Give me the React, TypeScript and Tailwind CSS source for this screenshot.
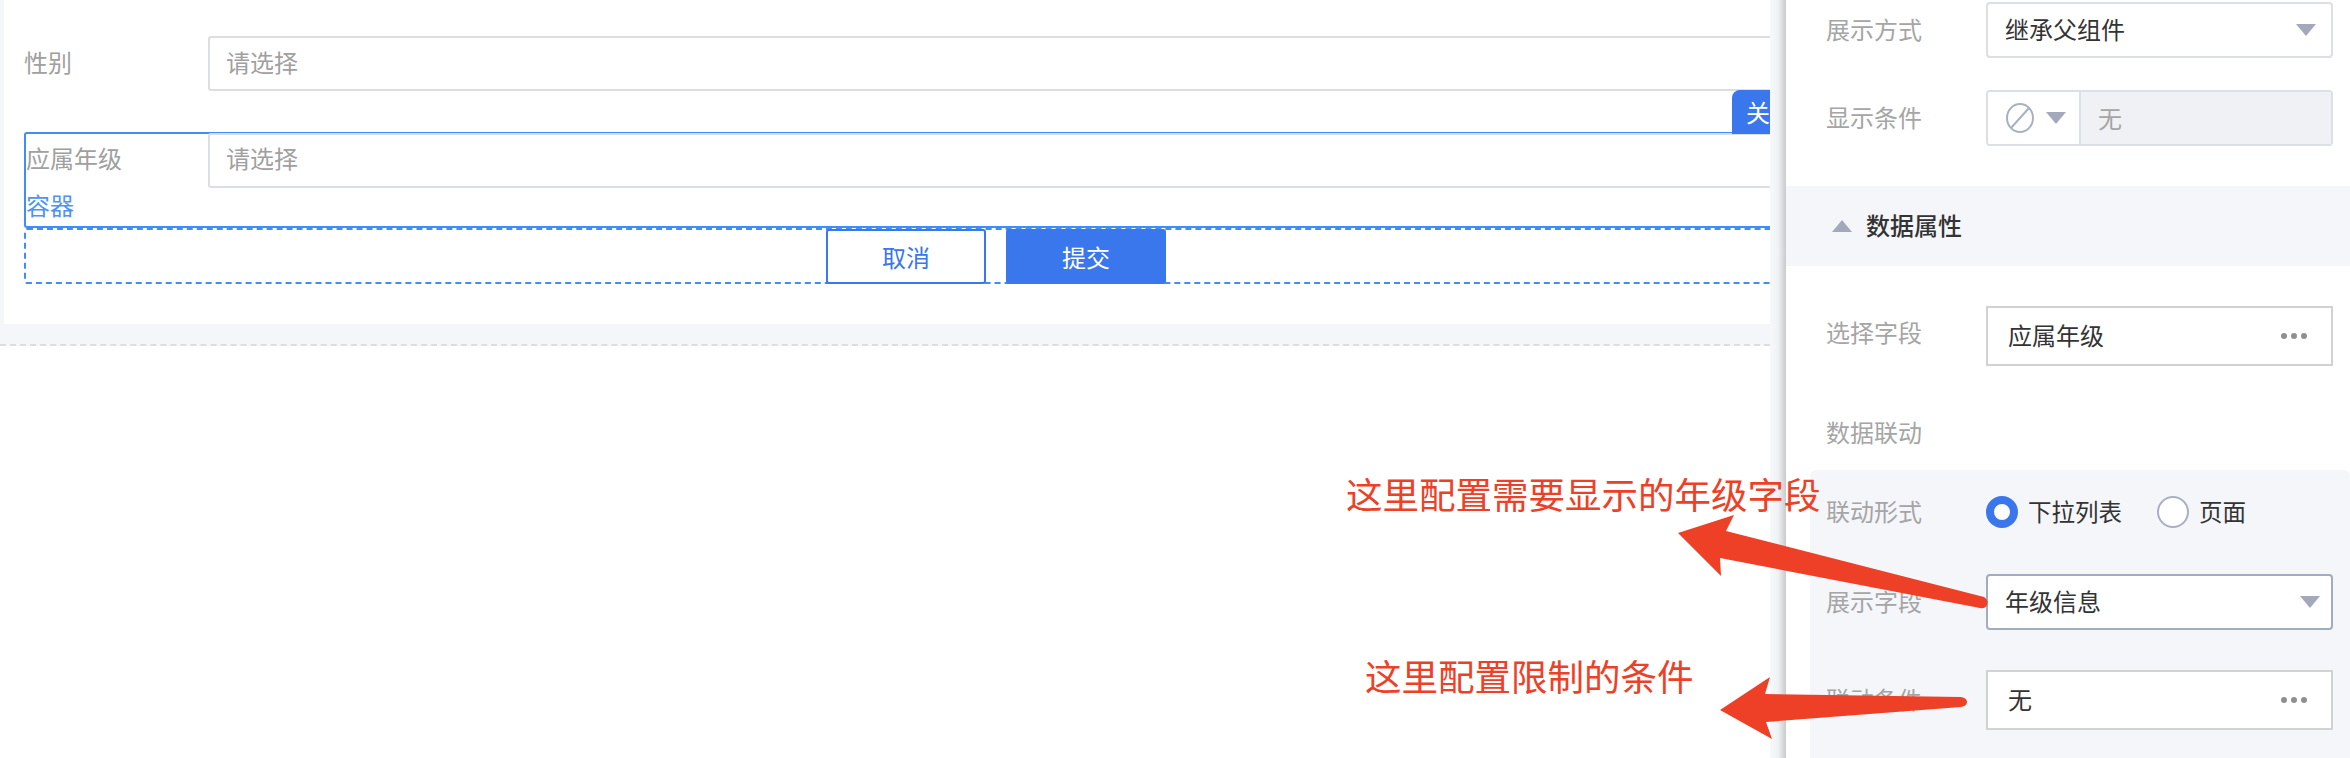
import React from "react";

const Caret = ({ up = false }: { up?: boolean }) => (
    <svg width="20" height="12" viewBox="0 0 20 12" className="shrink-0">
        <polygon points={up ? "10,0 20,12 0,12" : "0,0 20,0 10,12"} fill="#a3a9bb" />
    </svg>
);

const Dots = () => (
    <span className="flex gap-[4px] shrink-0">
        <i className="block w-[6px] h-[6px] rounded-full bg-[#8f8f8f]" />
        <i className="block w-[6px] h-[6px] rounded-full bg-[#8f8f8f]" />
        <i className="block w-[6px] h-[6px] rounded-full bg-[#8f8f8f]" />
    </span>
);

// glyphs sit a little low in the line box, the padding lifts them
const Txt = ({ children }: { children: React.ReactNode }) => (
    <span className="block pb-[3px]">{children}</span>
);

const Label = ({ children, className = "" }: { children: React.ReactNode, className?: string }) => (
    <span className={`block w-[160px] shrink-0 pb-[3px] text-[#a5a5a5] ${className}`}>{children}</span>
);

const Radio = ({ checked, children }: { checked?: boolean, children: React.ReactNode }) => (
    <span className="flex items-center gap-[10px] w-[171px] text-[#333] text-[23.5px]">
        <i className={checked
            ? "block w-[32px] h-[32px] rounded-full border-[8px] border-[#3a76ec] bg-white"
            : "block w-[32px] h-[32px] rounded-full border-2 border-[#a9b0c2] bg-white"} />
        <Txt>{children}</Txt>
    </span>
);

const FormCanvas = () => (
    <div className="w-[1770px] h-[346px] shrink-0 bg-[#f5f6fa] border-b-2 border-dashed border-[#dedede] pl-[4px]">
        <div className="h-[324px] bg-white pt-[36px] pl-[20px] overflow-hidden">
            <div className="flex items-center h-[55px]">
                <span className="w-[184px] shrink-0 pb-[3px] text-[#a0a0a0]">性别</span>
                <div className="flex-1 h-full flex items-center pl-[16px] border-2 border-r-0 border-[#dcdee6] rounded-l-[3px] text-[#a0a0a0]"><Txt>请选择</Txt></div>
            </div>
            <div className="relative mt-[41px] h-[96px] border-2 border-r-0 border-[#3f8ef7] rounded-l-[3px]">
                <div className="absolute right-0 top-[-44px] w-[38px] h-[44px] pl-[14px] flex items-center overflow-hidden rounded-tl-[8px] bg-[#3a76ec] text-white">关</div>
                <div className="flex items-center h-[55px] -mt-[1px]">
                    <span className="w-[182px] shrink-0 pb-[5px] text-[#a0a0a0]">应属年级</span>
                    <div className="flex-1 h-full flex items-center pl-[16px] pb-[2px] border-2 border-r-0 border-[#dcdee6] rounded-l-[3px] text-[#a0a0a0]"><Txt>请选择</Txt></div>
                </div>
                <div className="text-[#4a94f8] leading-[34px]">容器</div>
            </div>
            <div className="flex gap-[20px] h-[56px] pl-[800px] border-2 border-r-0 border-dashed border-[#3f8ef7] rounded-l-[3px]">
                <button className="w-[160px] h-[55px] -mt-[1px] border-2 border-[#3a76ec] rounded-[3px] bg-white text-[#3a76ec]">取消</button>
                <button className="w-[160px] h-[55px] -mt-[1px] rounded-[3px] bg-[#3a76ec] text-white">提交</button>
            </div>
        </div>
    </div>
);

const SettingsPanel = () => (
    <div className="flex-1 pt-[2px] bg-white">
        <div className="flex items-center pl-[40px] h-[56px]">
            <Label>展示方式</Label>
            <div className="w-[347px] h-full flex items-center justify-between pl-[17px] pr-[15px] border-2 border-[#dcdfe7] rounded-[4px] text-[#333]">
                <Txt>继承父组件</Txt>
                <Caret />
            </div>
        </div>
        <div className="flex items-center pl-[40px] h-[56px] mt-[32px]">
            <Label>显示条件</Label>
            <div className="w-[347px] h-full flex border-2 border-[#dcdfe7] rounded-[4px] overflow-hidden">
                <div className="w-[93px] flex items-center gap-[12px] pl-[18px] bg-white border-r-2 border-[#dcdfe7]">
                    <svg width="28" height="30" viewBox="0 0 28 30" fill="none" stroke="#a9b0c2" strokeWidth="2">
                        <ellipse cx="14" cy="15" rx="13" ry="14" />
                        <line x1="23" y1="5" x2="5" y2="25" />
                    </svg>
                    <Caret />
                </div>
                <div className="flex-1 flex items-center pl-[17px] bg-[#f0f1f5] text-[#a5a5a5]">无</div>
            </div>
        </div>
        <div className="flex items-center gap-[14px] h-[80px] mt-[40px] pl-[46px] bg-[#f5f6fa] text-[#333] font-medium">
            <Caret up />
            <Txt>数据属性</Txt>
        </div>
        <div className="flex items-center pl-[40px] h-[60px] mt-[40px]">
            <Label className="-mt-[6px]">选择字段</Label>
            <div className="w-[347px] h-full flex items-center justify-between pl-[20px] pr-[24px] border-2 border-[#d2d2d2] text-[#333]">
                <Txt>应属年级</Txt>
                <Dots />
            </div>
        </div>
        <div className="flex items-center pl-[40px] h-[36px] mt-[49px]">
            <Label>数据联动</Label>
        </div>
        <div className="mt-[19px] ml-[24px] pl-[16px] pt-[26px] h-[288px] bg-[#f5f6fa] rounded-t-[6px]">
            <div className="flex items-center h-[32px]">
                <Label>联动形式</Label>
                <Radio checked>下拉列表</Radio>
                <Radio>页面</Radio>
            </div>
            <div className="flex items-center h-[56px] mt-[46px]">
                <Label>展示字段</Label>
                <div className="w-[347px] h-full flex items-center justify-between bg-white pl-[17px] pr-[11px] border-2 border-[#a3abbf] rounded-[4px] text-[#333]">
                    <Txt>年级信息</Txt>
                    <Caret />
                </div>
            </div>
            <div className="flex items-center h-[60px] mt-[40px]">
                <Label>联动条件</Label>
                <div className="w-[347px] h-full flex items-center justify-between bg-white pl-[20px] pr-[24px] border-2 border-[#d2d2d2] text-[#333]">
                    <Txt>无</Txt>
                    <Dots />
                </div>
            </div>
        </div>
    </div>
);

export default function App() {
    return (
        <div className="relative flex w-[2350px] h-[758px] overflow-hidden bg-white text-[24px] leading-[32px] font-['Noto_Sans_CJK_SC','Noto_Sans',sans-serif]">
            <FormCanvas />
            <div className="w-[16px] shrink-0 bg-gradient-to-r from-[#f7f8fa] via-[#f1f2f5] to-[#c9cacd]" />
            <SettingsPanel />

            {/* annotations drawn over the screenshot */}
            <span className="absolute left-[1346px] top-[470px] text-[36.5px] leading-[48px] whitespace-nowrap text-[#ee4026]">这里配置需要显示的年级字段</span>
            <span className="absolute left-[1365px] top-[652px] text-[36.5px] leading-[48px] whitespace-nowrap text-[#ee4026]">这里配置限制的条件</span>
            <svg className="absolute left-0 top-0 pointer-events-none" width="2350" height="758" viewBox="0 0 2350 758">
                <path d="M1678 533 L1734 515 L1726 531 L1984 597 Q1989 600 1987 605 Q1985 609 1980 608 L1720 558 L1721 576 Z" fill="#ee4026" />
                <path d="M1720 710 L1770 677 L1765 694 L1961 697 Q1967 698 1967 702 Q1967 706 1961 707 L1766 722 L1772 739 Z" fill="#ee4026" />
            </svg>
        </div>
    );
}
